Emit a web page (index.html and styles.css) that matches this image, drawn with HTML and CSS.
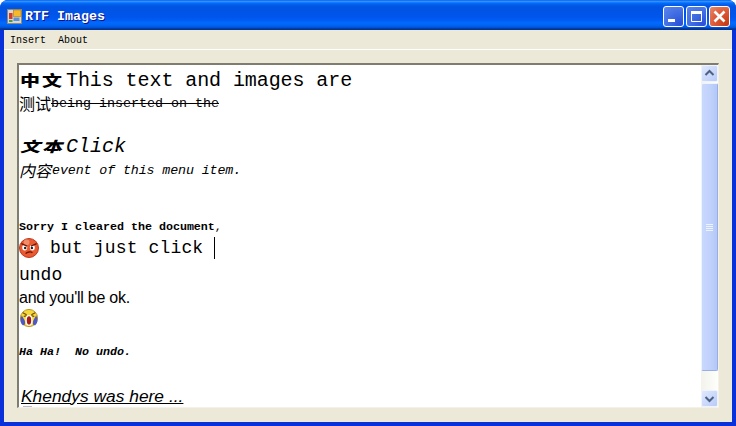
FILE: index.html
```html
<!DOCTYPE html>
<html lang="zh">
<head>
<meta charset="utf-8">
<title>RTF Images</title>
<link rel="stylesheet" href="styles.css">
</head>
<body>
<div class="window">
  <div class="titlebar">
    <svg class="appicon" width="15" height="15" viewBox="0 0 15 15">
      <rect x="0.5" y="0.5" width="14" height="14" fill="#d8d8d0" stroke="#8a8a80"/>
      <rect x="6.500" y="1" width="7.500" height="6.500" fill="#f5b92e" stroke="#b07810" stroke-width="0.6"/>
      <rect x="2" y="4" width="3.500" height="6" fill="#d83a28"/>
      <rect x="6.500" y="8.500" width="6" height="3.500" fill="#5c90d8"/>
      <rect x="2" y="11" width="3.500" height="2" fill="#4a9a58"/>
    </svg>
    <span class="title">RTF Images</span>
    <div class="controls">
      <div class="btn btn-blue">
        <svg width="19" height="19" viewBox="0 0 19 19"><rect x="4" y="12" width="7" height="3" fill="#fff"/></svg>
      </div>
      <div class="btn btn-blue">
        <svg width="19" height="19" viewBox="0 0 19 19"><path d="M4.500 4.500h10v10h-10z" fill="none" stroke="#fff"/><rect x="4" y="4" width="11" height="3" fill="#fff"/></svg>
      </div>
      <div class="btn btn-red">
        <svg width="19" height="19" viewBox="0 0 19 19"><path d="M4.500 4.500l10 10M14.500 4.500l-10 10" stroke="#fff" stroke-width="2.600" fill="none"/></svg>
      </div>
    </div>
  </div>
  <div class="client">
    <nav class="menubar"><span>Insert</span><span>About</span></nav>
    <div class="content">
      <div class="richbox">
        <div class="doc">
          <p class="line r1"><span class="cjk-bold">中文</span><span class="mono20 tight">This text and images are</span></p>
          <p class="line r2"><span class="cjk">测试</span><span class="mono13 strike">being inserted on the</span></p>
          <p class="line r3"><span class="cjk-bold ital">文本</span><span class="mono20 ital">Click</span></p>
          <p class="line r4"><span class="cjk ital">内容</span><span class="mono13 ital narrow">event of this menu item.</span></p>
          <p class="line r5"><span class="mono11 bold">Sorry I cleared the document</span><span class="mono11">,</span></p>
          <p class="line r6">
            <svg class="face" width="20" height="20" viewBox="0 0 21 21">
              <circle cx="10.500" cy="10.500" r="10" fill="#ea5a30" stroke="#b8341c"/>
              <circle cx="8" cy="4.500" r="3" fill="#f49a78" opacity=".8"/>
              <ellipse cx="6" cy="10" rx="2.600" ry="3" fill="#fff"/>
              <ellipse cx="14" cy="10" rx="2.600" ry="3" fill="#fff"/>
              <circle cx="6.500" cy="10.500" r="1.300" fill="#222"/>
              <circle cx="13.500" cy="10.500" r="1.300" fill="#222"/>
              <path d="M2.500 6l6 2.500M18.500 6l-6 2.500" stroke="#701408" stroke-width="1.400"/>
              <path d="M7 16.500c1-2 6-2.500 7-1" stroke="#701408" stroke-width="1.400" fill="none"/>
            </svg>
            <span class="mono18 after-face">but just click </span><span class="caret"></span>
          </p>
          <p class="line r7"><span class="mono18">undo</span></p>
          <p class="line r8"><span class="sans16">and you'll be ok.</span></p>
          <p class="line r9">
            <svg class="face" width="20" height="20" viewBox="0 0 21 21">
              <circle cx="10.500" cy="10.500" r="9" fill="#f6d838" stroke="#b89018"/>
              <path d="M3 8c-2 3-2 8 1 10 2 1 3-2 2-5zM18 8c2 3 2 8-1 10-2 1-3-2-2-5z" fill="#4c58c8"/>
              <path d="M4 5l4 2M17 5l-4 2M5 9l3-1M16 9l-3-1" stroke="#6a4a10" stroke-width="1.200"/>
              <ellipse cx="10.500" cy="13" rx="3" ry="5" fill="#a81c14" stroke="#fff" stroke-width="1.300"/>
            </svg>
          </p>
          <p class="line r10"><span class="mono11 bold ital">Ha Ha!  No undo.</span></p>
          <p class="line r11"><span class="sans17 ital under">Khendys was here ...</span></p>
          <div class="peek"></div>
        </div>
        <div class="scrollbar">
          <div class="sb-btn">
            <svg width="17" height="17" viewBox="0 0 17 17"><path d="M4.500 10l4-4 4 4" fill="none" stroke="#4d6185" stroke-width="2"/></svg>
          </div>
          <div class="sb-thumb">
            <svg width="9" height="9" viewBox="0 0 9 9"><path d="M1 1.500h7M1 3.500h7M1 5.500h7M1 7.500h7" stroke="#eef4fe"/></svg>
          </div>
          <div class="sb-track"></div>
          <div class="sb-btn">
            <svg width="17" height="17" viewBox="0 0 17 17"><path d="M4.500 7l4 4 4-4" fill="none" stroke="#4d6185" stroke-width="2"/></svg>
          </div>
        </div>
      </div>
    </div>
  </div>
</div>
</body>
</html>
```
FILE: styles.css
```css
* { box-sizing: border-box; }
html, body { margin: 0; padding: 0; background: #fff; }
body { width: 736px; height: 426px; overflow: hidden; }
p { margin: 0; }

.window {
  width: 736px;
  height: 426px;
  display: flex;
  flex-direction: column;
  border-radius: 8px 8px 0 0;
  overflow: hidden;
  background: #0831d9;
}
.titlebar {
  height: 30px;
  flex: none;
  display: flex;
  align-items: center;
  padding: 0 6px 0 7px;
  background: linear-gradient(to bottom, #0058ee 0%, #3593ff 4%, #288eff 6%, #127dff 8%, #036ffc 10%, #0262ee 14%, #0057e5 20%, #0054e3 24%, #0055eb 56%, #005bf5 66%, #026afe 76%, #0062ef 86%, #0052d6 92%, #0040ab 94%, #003092 100%);
}
.appicon { flex: none; margin-top: 2px; }
.title {
  margin-left: 3px;
  font: bold 13.330px "Liberation Mono", monospace;
  color: #fff;
  text-shadow: 1px 1px 0 #0f1089;
  white-space: pre;
  margin-top: 2px;
}
.controls { margin-left: auto; display: flex; gap: 2px; margin-top: 2px; }
.btn {
  width: 21px;
  height: 21px;
  border: 1px solid #fff;
  border-radius: 3px;
  display: flex;
  align-items: center;
  justify-content: center;
}
.btn-blue { background: radial-gradient(circle at 85% 90%, #2a50d8 0%, #3c68e0 40%, #5a86ee 100%); }
.btn-red { background: radial-gradient(circle at 90% 90%, #c83a14 0%, #dc5a38 55%, #e88a6c 100%); }

.client {
  flex: 1;
  margin: 0 4px 4px;
  background: #ece9d8;
  display: flex;
  flex-direction: column;
  min-height: 0;
}
.menubar {
  height: 20px;
  flex: none;
  border-bottom: 1px solid #fff;
  display: flex;
  gap: 12px;
  align-items: center;
  padding: 2px 0 0 6px;
  font: 10px "Liberation Mono", monospace;
  color: #000;
}
.content {
  flex: 1;
  min-height: 0;
  padding: 13px 13px 14px 13px;
}
.richbox {
  height: 100%;
  width: 702px;
  display: flex;
  background: #fff;
  border-top: 2px solid #7f7c70;
  border-left: 2px solid #7f7c70;
  border-right: 1px solid #f4f2e8;
  border-bottom: 1px solid #f4f2e8;
}
.doc {
  flex: 1;
  min-width: 0;
  overflow: hidden;
  color: #000;
}
.line {
  display: flex;
  align-items: center;
  white-space: pre;
}
.r1 { height: 26px; margin-top: 2px; }
.r2 { height: 22px; margin-top: -1px; }
.r3 { height: 24px; margin-top: 20px; }
.r4 { height: 24px; }
.r5 { height: 16px; margin-top: 37px; }
.r6 { height: 24px; margin-top: 1px; }
.r7 { height: 22px; margin-top: 4px; }
.r8 { height: 20px; margin-top: 2px; }
.r9 { height: 21px; margin-top: -1px; }
.r10 { height: 16px; margin-top: 16px; }
.r11 { height: 20px; margin-top: 26px; padding-left: 2px; }

.cjk-bold {
  display: inline-block;
  font: 900 20px/20px "Noto Sans CJK SC", sans-serif;
  width: 47px;
  letter-spacing: 2px;
  padding-left: 1px;
  transform: scaleY(.72);
}
.cjk { font: 400 16px/16px "Noto Sans CJK SC", sans-serif; width: 32px; }
.mono20 { font: 20px "Liberation Mono", monospace; }
.mono18 { font: 18px "Liberation Mono", monospace; }
.mono13 { font: 13.330px "Liberation Mono", monospace; }
.mono11 { font: 11.670px "Liberation Mono", monospace; }
.sans16 { font: 16px "Liberation Sans", sans-serif; letter-spacing: -0.250px; }
.sans17 { font: 17.330px "Liberation Sans", sans-serif; letter-spacing: 0.030px; }
.tight { letter-spacing: -0.080px; }
.narrow { margin-left: 1px; letter-spacing: -0.120px; }
.bold { font-weight: bold; }
.ital { font-style: italic; }
.strike { text-decoration: line-through; }
.under { text-decoration: underline; }
.face { flex: none; }
.after-face { margin-left: 11px; letter-spacing: 0.150px; }
.caret { width: 1px; height: 22px; background: #000; }
.peek { width: 9px; height: 1px; margin-left: 4px; background: #b8b8c8; }

.scrollbar {
  width: 17px;
  flex: none;
  display: flex;
  flex-direction: column;
  background: linear-gradient(to right, #f3f3ec, #fefefb);
}
.sb-btn {
  height: 17px;
  flex: none;
  border: 1px solid #eef3fd;
  border-radius: 2px;
  background: linear-gradient(135deg, #e0e8fd, #b8cbf8);
  display: flex;
  align-items: center;
  justify-content: center;
}
.sb-btn svg { margin: -1px; }
.sb-thumb {
  height: 288px;
  flex: none;
  margin-top: 1px;
  border: 1px solid #eef3fd;
  border-bottom-color: #98aee8;
  border-right-color: #98aee8;
  border-radius: 2px;
  background: linear-gradient(to right, #c9d8fc, #bfd0fb 60%, #b4c8f6);
  display: flex;
  align-items: center;
  justify-content: center;
}
.sb-track { flex: 1; }
```
